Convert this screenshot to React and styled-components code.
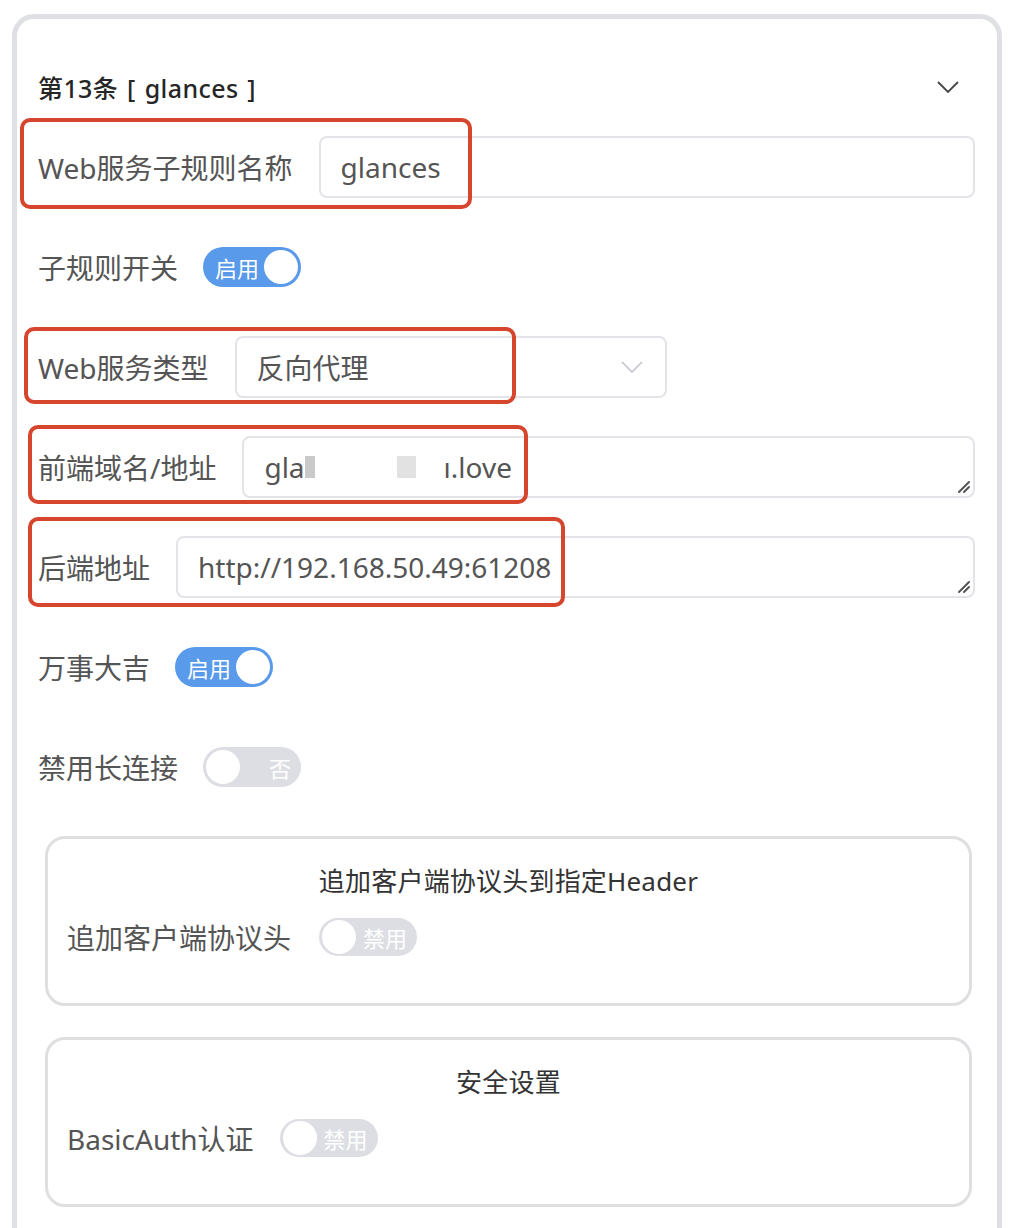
import React from "react";
import styled, { createGlobalStyle } from "styled-components";

const Global = createGlobalStyle`
  html, body {
    margin: 0;
    padding: 0;
    background: #ffffff;
    overflow: hidden;
  }
  body {
    font-family: "Noto Sans", "Noto Sans CJK SC", sans-serif;
  }
`;

const Card = styled.div`
  margin: 14px 14px 0 12px;
  border: 5px solid #dfe0e3;
  border-radius: 22px;
  padding: 48px 22px 120px 21px;
  background: #fff;
  box-sizing: border-box;
  min-height: 1300px;
`;

const Header = styled.div`
  display: flex;
  align-items: center;
  justify-content: space-between;
  height: 40px;
  margin-bottom: 29px;
`;

const Title = styled.div`
  font-size: 25px;
  font-weight: 500;
  color: #262626;
  letter-spacing: 0.4px;
  word-spacing: 2px;
`;

const Chevron = styled.svg`
  margin-right: 16px;
  display: block;
`;

const Rows = styled.div`
  display: flex;
  flex-direction: column;
  gap: 38px;
`;

const Row = styled.div`
  position: relative;
  display: flex;
  align-items: center;
  min-height: 62px;
`;

const Label = styled.div`
  font-size: 28px;
  color: #555555;
  padding-right: ${(p) => p.$gap || 26}px;
  white-space: nowrap;
`;

const Field = styled.div`
  position: relative;
  flex: ${(p) => (p.$width ? "none" : "1")};
  width: ${(p) => (p.$width ? `${p.$width}px` : "auto")};
  height: 62px;
  box-sizing: border-box;
  border: 2px solid #e2e4e8;
  border-radius: 8px;
  display: flex;
  align-items: center;
  padding: 0 20px;
  font-size: 28px;
  color: #555555;
  background: #fff;
  white-space: nowrap;
  overflow: hidden;
`;

const Grip = styled.svg`
  position: absolute;
  right: 2px;
  bottom: 2px;
`;

const SelectArrow = styled.svg`
  position: absolute;
  right: 22px;
  top: 50%;
  margin-top: -6px;
`;

const Mark = styled.span`
  position: absolute;
  left: ${(p) => p.$left}px;
  top: ${(p) => p.$top}px;
  width: ${(p) => p.$w}px;
  height: ${(p) => p.$h}px;
  border: 4px solid #d6452e;
  border-radius: 10px;
  box-sizing: border-box;
  pointer-events: none;
`;

const Blur = styled.span`
  display: inline-block;
  width: ${(p) => p.$w}px;
  height: 22px;
  margin-left: ${(p) => p.$ml || 0}px;
  background: ${(p) => p.$c};
`;

const Tail = styled.span`
  margin-left: 28px;
`;

const Switch = styled.span`
  display: inline-flex;
  align-items: center;
  flex-direction: ${(p) => (p.$on ? "row" : "row-reverse")};
  justify-content: space-between;
  width: 98px;
  height: ${(p) => p.$h || 40}px;
  box-sizing: border-box;
  border-radius: 20px;
  padding-left: ${(p) => (p.$on ? 12 : 3)}px;
  padding-right: ${(p) => (p.$on ? 3 : 10)}px;
  background: ${(p) => (p.$on ? "#5a9aea" : "#dcdee3")};
  color: #fff;
  font-size: 22px;
`;

const Knob = styled.span`
  width: ${(p) => p.$s || 34}px;
  height: ${(p) => p.$s || 34}px;
  border-radius: 50%;
  background: #fff;
  flex: none;
`;

const Group = styled.div`
  margin: 0 3px 0 7px;
  border: 3px solid #dedfe1;
  border-radius: 20px;
  padding: 24px 19px 47px 19px;
`;

const GroupTitle = styled.div`
  text-align: center;
  font-size: 26px;
  color: #333;
  line-height: 36px;
  margin-bottom: 19px;
  letter-spacing: 0.2px;
`;

const GroupRow = styled.div`
  display: flex;
  align-items: center;
  height: 38px;
`;

const Groups = styled.div`
  display: flex;
  flex-direction: column;
  gap: 31px;
  margin-top: 38px;
`;

const ToggleRow = ({ label, on, text, gap }) => (
  <Row>
    <Label $gap={gap}>{label}</Label>
    <Switch $on={on}>
      <span>{text}</span>
      <Knob />
    </Switch>
  </Row>
);

const ResizeGrip = () => (
  <Grip width="16" height="16" viewBox="0 0 16 16">
    <path d="M14 4 L4 14 M14 9 L9 14" stroke="#555" strokeWidth="2" strokeLinecap="round" />
  </Grip>
);

export default function App() {
  return (
    <>
      <Global />
      <Card>
        <Header>
          <Title>第13条 [ glances ]</Title>
          <Chevron width="22" height="12" viewBox="0 0 22 12">
            <path d="M1 1 L11 11 L21 1" fill="none" stroke="#444" strokeWidth="1.8" />
          </Chevron>
        </Header>
        <Rows>
          <Row>
            <Label>Web服务子规则名称</Label>
            <Field>glances</Field>
            <Mark $left={-18} $top={-18} $w={452} $h={91} />
          </Row>
          <ToggleRow label="子规则开关" on text="启用" gap={25} />
          <Row>
            <Label>Web服务类型</Label>
            <Field $width={432}>
              反向代理
              <SelectArrow width="22" height="12" viewBox="0 0 22 12">
                <path d="M1 1 L11 11 L21 1" fill="none" stroke="#c0c4cc" strokeWidth="1.6" />
              </SelectArrow>
            </Field>
            <Mark $left={-14} $top={-9} $w={492} $h={77} />
          </Row>
          <Row>
            <Label>前端域名/地址</Label>
            <Field>
              gla
              <Blur $w={10} $c="#c9c9c9" />
              <Blur $w={19} $ml={82} $c="#e2e2e2" />
              <Tail>ı.love</Tail>
              <ResizeGrip />
            </Field>
            <Mark $left={-10} $top={-11} $w={500} $h={79} />
          </Row>
          <Row>
            <Label>后端地址</Label>
            <Field>
              http://192.168.50.49:61208
              <ResizeGrip />
            </Field>
            <Mark $left={-10} $top={-19} $w={537} $h={90} />
          </Row>
          <ToggleRow label="万事大吉" on text="启用" gap={25} />
          <ToggleRow label="禁用长连接" on={false} text="否" gap={25} />
        </Rows>
        <Groups>
          <Group>
            <GroupTitle>追加客户端协议头到指定Header</GroupTitle>
            <GroupRow>
              <Label $gap={28}>追加客户端协议头</Label>
              <Switch $on={false} $h={38}>
                <span>禁用</span>
                <Knob $s={34} />
              </Switch>
            </GroupRow>
          </Group>
          <Group>
            <GroupTitle>安全设置</GroupTitle>
            <GroupRow>
              <Label $gap={26}>BasicAuth认证</Label>
              <Switch $on={false} $h={38}>
                <span>禁用</span>
                <Knob $s={34} />
              </Switch>
            </GroupRow>
          </Group>
        </Groups>
      </Card>
    </>
  );
}
